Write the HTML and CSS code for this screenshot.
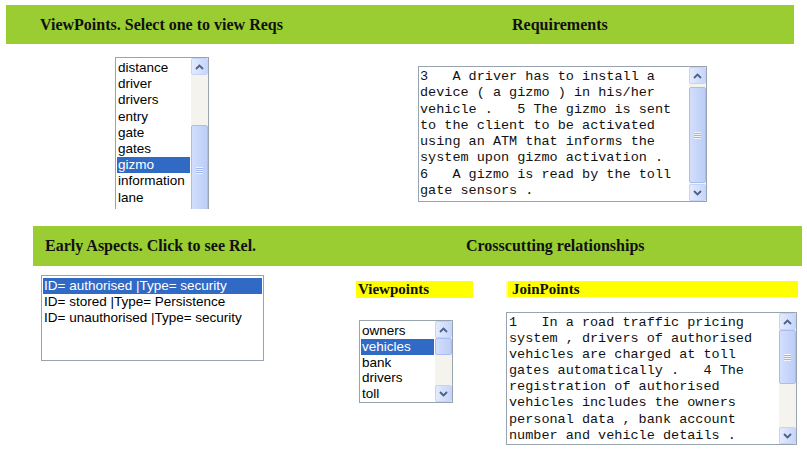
FILE: index.html
```html
<!DOCTYPE html>
<html>
<head>
<meta charset="utf-8">
<link rel="stylesheet" href="styles.css">
</head>
<body>
<div class="hdr hdr1">
  <div class="h1l">ViewPoints. Select one to view Reqs</div>
  <div class="h1r">Requirements</div>
</div>
<div class="row1">
  <div class="box list1">
    <div class="items">
      <div class="it">distance</div>
      <div class="it">driver</div>
      <div class="it">drivers</div>
      <div class="it">entry</div>
      <div class="it">gate</div>
      <div class="it">gates</div>
      <div class="it sel">gizmo</div>
      <div class="it">information</div>
      <div class="it">lane</div>
    </div>
    <div class="sb">
      <div class="btn"><svg width="9" height="6" viewBox="0 0 9 6"><path d="M1 5 L4.5 1.5 L8 5" fill="none" stroke="#4d6185" stroke-width="1.8"/></svg></div>
      <div class="trk t1a"></div>
      <div class="thumb th1"><span class="grip"></span></div>
    </div>
  </div>
  <div class="box ta ta1">
    <div class="txt">3   A driver has to install a
device ( a gizmo ) in his/her
vehicle .   5 The gizmo is sent
to the client to be activated
using an ATM that informs the
system upon gizmo activation .
6   A gizmo is read by the toll
gate sensors .</div>
    <div class="sb">
      <div class="btn"><svg width="9" height="6" viewBox="0 0 9 6"><path d="M1 5 L4.5 1.5 L8 5" fill="none" stroke="#4d6185" stroke-width="1.8"/></svg></div>
      <div class="trk t2a"></div>
      <div class="thumb th2"><span class="grip"></span></div>
      <div class="trk fill"></div>
      <div class="btn"><svg width="9" height="6" viewBox="0 0 9 6"><path d="M1 1 L4.5 4.5 L8 1" fill="none" stroke="#4d6185" stroke-width="1.8"/></svg></div>
    </div>
  </div>
</div>
<div class="hdr hdr2">
  <div class="h2l">Early Aspects. Click to see Rel.</div>
  <div class="h2r">Crosscutting relationships</div>
</div>
<div class="row2">
  <div class="box list2">
    <div class="items">
      <div class="it sel">ID= authorised |Type= security</div>
      <div class="it">ID= stored |Type= Persistence</div>
      <div class="it">ID= unauthorised |Type= security</div>
    </div>
  </div>
  <div class="col2">
    <div class="ylab vlab">Viewpoints</div>
    <div class="box list3">
      <div class="items">
        <div class="it">owners</div>
        <div class="it sel">vehicles</div>
        <div class="it">bank</div>
        <div class="it">drivers</div>
        <div class="it">toll</div>
      </div>
      <div class="sb">
        <div class="btn"><svg width="9" height="6" viewBox="0 0 9 6"><path d="M1 5 L4.5 1.5 L8 5" fill="none" stroke="#4d6185" stroke-width="1.8"/></svg></div>
        <div class="thumb th3"></div>
        <div class="trk fill"></div>
        <div class="btn"><svg width="9" height="6" viewBox="0 0 9 6"><path d="M1 1 L4.5 4.5 L8 1" fill="none" stroke="#4d6185" stroke-width="1.8"/></svg></div>
      </div>
    </div>
  </div>
  <div class="col3">
    <div class="ylab jlab">JoinPoints</div>
    <div class="box ta ta2">
      <div class="txt">1   In a road traffic pricing
system , drivers of authorised
vehicles are charged at toll
gates automatically .   4 The
registration of authorised
vehicles includes the owners
personal data , bank account
number and vehicle details .</div>
      <div class="sb">
        <div class="btn"><svg width="9" height="6" viewBox="0 0 9 6"><path d="M1 5 L4.5 1.5 L8 5" fill="none" stroke="#4d6185" stroke-width="1.8"/></svg></div>
        <div class="thumb th4"><span class="grip"></span></div>
        <div class="trk fill"></div>
        <div class="btn"><svg width="9" height="6" viewBox="0 0 9 6"><path d="M1 1 L4.5 4.5 L8 1" fill="none" stroke="#4d6185" stroke-width="1.8"/></svg></div>
      </div>
    </div>
  </div>
</div>
</body>
</html>
```
FILE: styles.css
```css
* { box-sizing: border-box; }
html, body { margin: 0; padding: 0; background: #fff; }
body { width: 807px; height: 457px; overflow: hidden; font-family: "Liberation Serif", serif; color: #111; }

.hdr { background: #9acd32; display: flex; align-items: center; font-weight: bold; font-size: 16px; }
.hdr1 { margin: 5px 0 0 6px; width: 788px; height: 39px; }
.h1l { width: 277px; padding-left: 34px; white-space: nowrap; }
.h1r { flex: 1; padding-left: 229px; }
.hdr2 { margin: 17px 0 0 33px; width: 769px; height: 40px; }
.h2l { width: 433px; padding-left: 12px; white-space: nowrap; }
.h2r { flex: 1; }

.box { display: flex; border: 1px solid #98a3b0; background: #fff; overflow: hidden; }
.items { flex: 1; font-family: "Liberation Sans", Arial, sans-serif; font-size: 13.5px; line-height: 16.2px; padding: 0 1px; overflow: hidden; white-space: nowrap; color: #000; }
.it { height: 16.2px; padding-left: 1px; }
.sel { background: #316ac5; color: #fff; }

.row1 { display: flex; align-items: flex-start; padding-left: 115px; margin-top: 13px; height: 152px; }
.list1 { width: 94px; height: 152px; border-bottom: none; }
.list1 .items { padding-top: 2px; }
.ta { font-family: "Liberation Mono", "Courier New", monospace; font-size: 13.5px; line-height: 16.3px; }
.txt { flex: 1; white-space: pre; padding: 2px 0 0 1px; overflow: hidden; color: #111; }
.ta1 { margin: 9px 0 0 209px; width: 289px; height: 136px; }

.sb { width: 17px; display: flex; flex-direction: column; background: #f4f3ee; flex-shrink: 0; }
.btn { height: 17px; flex-shrink: 0; display: flex; align-items: center; justify-content: center; background: linear-gradient(90deg, #e3ebfd, #c6d5fa); border: 1px solid #c4d3f7; border-radius: 2px; }
.trk { flex-shrink: 0; }
.fill { flex: 1; }
.thumb { flex-shrink: 0; background: linear-gradient(90deg, #d2defc, #bccdf8); border: 1px solid #a9bdf0; border-radius: 2px; display: flex; align-items: center; justify-content: center; }
.grip { width: 7px; height: 7px; background: repeating-linear-gradient(180deg, #eef3fe 0 1px, #9fb4ea 1px 2px); }
.t1a { height: 50px; }
.th1 { height: 90px; }
.t2a { height: 3px; }
.th2 { height: 96px; }
.th3 { height: 17px; }
.th4 { height: 54px; }

.row2 { display: flex; align-items: flex-start; padding-left: 41px; margin-top: 9px; }
.list2 { width: 223px; height: 86px; }
.list2 .items { padding: 2px 1px 0 1px; }
.col2 { margin-left: 92px; width: 117px; padding-top: 6px; }
.ylab { background: #ffff00; font-weight: bold; font-size: 15px; white-space: nowrap; }
.vlab { height: 17px; line-height: 17px; padding-left: 2px; }
.list3 { margin: 22px 0 0 3px; width: 94px; height: 83px; }
.list3 .items { padding-top: 2px; line-height: 15.8px; }
.list3 .it { height: 15.8px; }
.col3 { margin-left: 33px; width: 292px; padding-top: 6px; }
.jlab { height: 16px; line-height: 16px; padding-left: 4px; border-left: 2px solid #ffff99; }
.ta2 { margin-top: 15px; width: 291px; height: 133px; }
.ta2 .txt { padding-top: 2px; padding-left: 2px; line-height: 16.1px; }
```
